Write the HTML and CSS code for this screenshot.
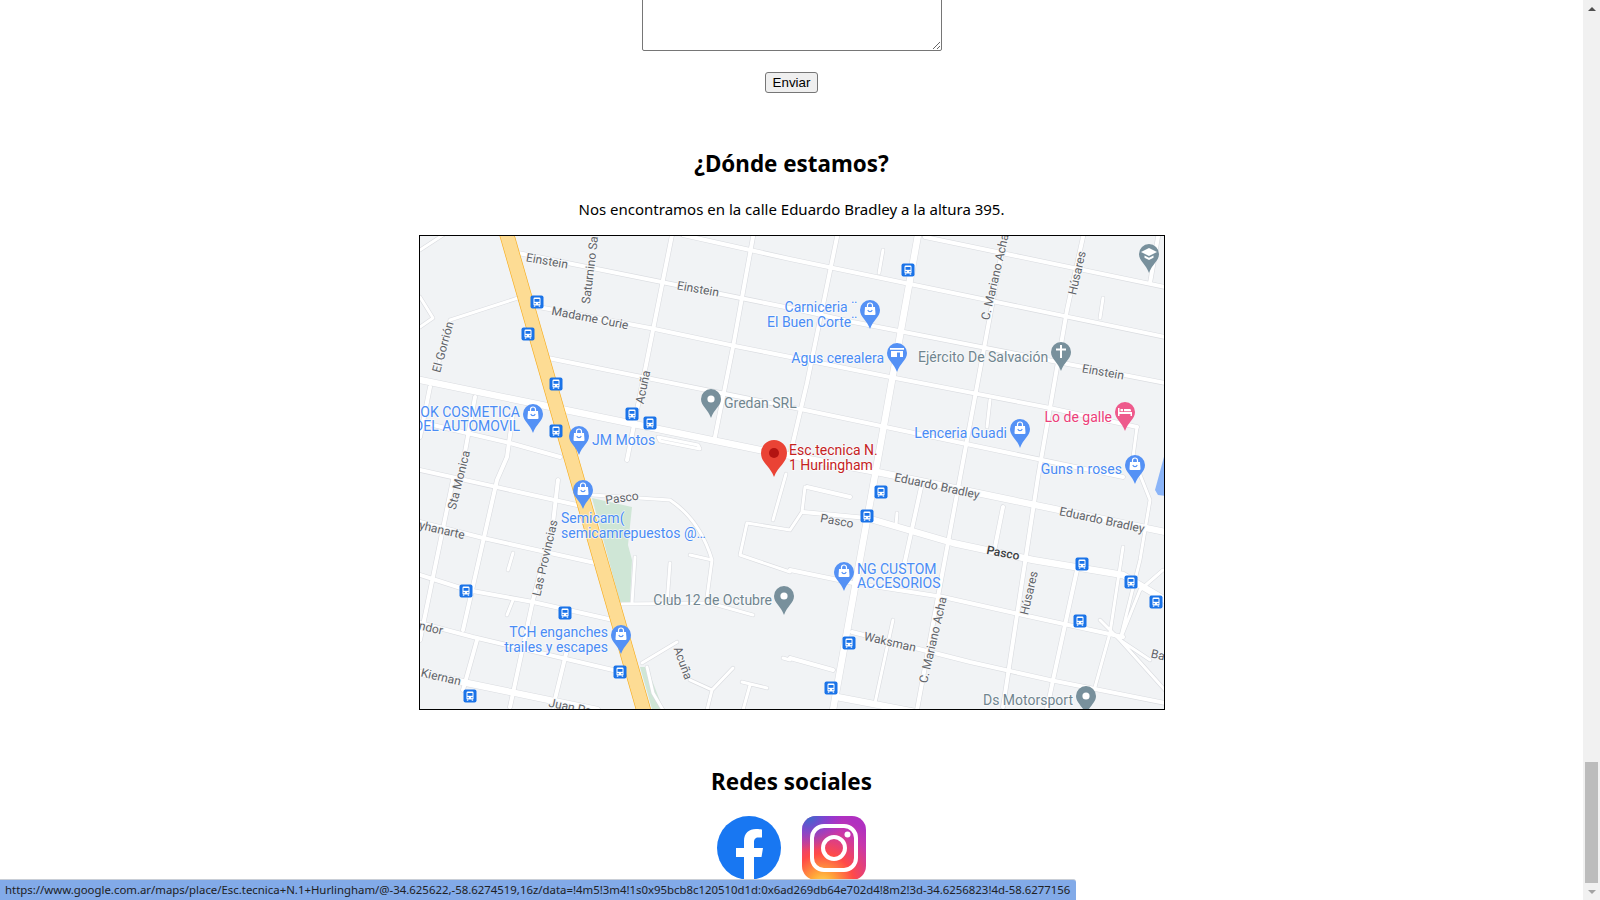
FILE: index.html
```html
<!DOCTYPE html>
<html lang="es">
<head>
    <meta charset="UTF-8">
    <meta name="viewport" content="width=device-width, initial-scale=1.0">
    <title>Contacto</title>
    <link rel="stylesheet" href="styles.css">
</head>
<body>
    <main class="page">
        <form class="contact-form">
            <textarea class="message"></textarea>
            <button type="button" class="send">Enviar</button>
        </form>

        <h2 class="where-title">¿Dónde estamos?</h2>
        <p class="where-text">Nos encontramos en la calle Eduardo Bradley a la altura 395.</p>

        <svg class="map" viewBox="420 236 744 473" role="img" aria-label="Mapa">
            <defs>
                <g id="thin">
                    <path d="M450 320L518 298M450 320L437 370M420 250L443 235M420 297L433 318L420 327"/>
                    <path d="M658 437L698 445L700 449L660 441Z"/>
                    <path d="M592 495L670 500Q700 520 712 560M690 555L712 560L707 597M635 557L632 603M670 563L667 603"/>
                    <path d="M622 604L710 603L753 615M642 663L677 642M647 667L653 693L663 710M690 680L712 690L733 668M712 690L707 710M742 682L767 688M750 685L743 710M783 658L790 660"/>
                    <path d="M790 530L747 523L740 555L790 572M790 530L802 512L805 487M786 474L773 520"/>
                    <path d="M883 250L879 273M1103 298L1100 318M990 400L987 427M897 513L896 525M513 553L508 570M513 600L507 615M893 620L875 703"/>
                    <path d="M1137 427L1133 457L1150 500L1140 560L1120 640M1123 547L1110 633L1095 687M1163 570L1140 590L1120 640L1165 690M1120 640L1100 620M1120 640L1150 660"/>
                </g>
                <g id="minor">
                    <path d="M683 235L790 259L905 283L1165 337M925 237L1165 287"/>
                    <path d="M518 253L790 308L853 322L1165 383"/>
                    <path d="M533 306L650 328L730 345L890 377L1050 408L1137 427"/>
                    <path d="M548 358L805 410L1123 477"/>
                    <path d="M420 422L467 433L510 443L560 457M420 470L577 505M420 522L483 538L595 563M420 575L467 590L533 602L613 620M420 623L473 637L613 670"/>
                    <path d="M790 570L853 583L943 597L1023 615L1123 637M852 632L970 662L1050 680L1165 703M790 658L833 670M803 512L867 518M807 487L850 497"/>
                    <path d="M672 235L653 330L627 460M753 237L733 347L715 437M837 237L807 383L790 455"/>
                    <path d="M1005 235L917 710M1083 237L1067 310L1038 477L1003 707M1158 237L1150 283"/>
                    <path d="M922 483L903 570M1003 507L995 547M1077 570L1053 680L1047 709"/>
                    <path d="M475 397L463 463M430 387L420 437M513 413L507 457L497 480L463 630M558 480L553 523L533 600L510 707M453 480L420 640M477 640L463 690M567 650L553 707"/>
                </g>
                <g id="wide">
                    <path d="M420 380L760 450L877 472L1165 532M867 518L953 543L1033 560L1123 575L1165 600M420 673L467 683L597 710M837 697L957 720"/>
                    <path d="M918 235L833 710"/>
                </g>
                <g id="bus">
                    <rect x="-6.500" y="-6.500" width="13" height="13" rx="2" fill="#1a73e8"/>
                    <rect x="-3.500" y="-4.500" width="7" height="8" rx="1.200" fill="#fff"/>
                    <rect x="-2.500" y="-3" width="5" height="2.800" fill="#1a73e8"/>
                    <rect x="-2.500" y="1" width="1.200" height="1.200" fill="#1a73e8"/>
                    <rect x="1.300" y="1" width="1.200" height="1.200" fill="#1a73e8"/>
                    <rect x="-3.200" y="3.500" width="1.500" height="1.200" fill="#fff"/>
                    <rect x="1.700" y="3.500" width="1.500" height="1.200" fill="#fff"/>
                </g>
                <path id="drop" d="M0-10A10 10 0 0 1 10 0C10 7 3 10 0 19C-3 10-10 7-10 0A10 10 0 0 1 0-10Z"/>
                <g id="pin-shop">
                    <use href="#drop"/>
                    <path d="M-5-3H5L5.500 4Q5.500 5 4.500 5H-4.500Q-5.500 5-5.500 4Z" fill="#fff"/>
                    <path d="M-2.500-3V-4.500A2.500 2.500 0 0 1 2.500-4.500V-3" fill="none" stroke="#fff" stroke-width="1.200"/>
                    <path d="M-2.200 0A2.300 2.300 0 0 0 2.200 0" fill="none" stroke="#5491f5" stroke-width="1.100"/>
                </g>
                <g id="pin-store">
                    <use href="#drop"/>
                    <path d="M-7-5H7V-3.200H-7ZM-6-2H6V4H3V-.5H0V4H-6Z" fill="#fff"/>
                </g>
                <g id="pin-dot">
                    <use href="#drop"/>
                    <circle r="3.600" fill="#fff"/>
                </g>
                <g id="pin-cross">
                    <use href="#drop"/>
                    <path d="M-1-7H1V-3.500H5V-1.500H1V6H-1V-1.500H-5V-3.500H-1Z" fill="#fff"/>
                </g>
                <g id="pin-school">
                    <use href="#drop"/>
                    <path d="M0-6L8-2L0 2L-8-2ZM-4.500 1.500L0 3.800L4.500 1.500V3.800L0 6L-4.500 3.800Z" fill="#fff"/>
                </g>
                <g id="pin-bed">
                    <use href="#drop"/>
                    <path d="M-7-4H-5.500V0H7V4H5.500V2H-5.500V4H-7ZM-4.500-3H-2V-.8H-4.500ZM-1-3H5Q6-3 6-1.500V-.8H-1Z" fill="#fff"/>
                </g>
            </defs>

            <rect x="420" y="236" width="744" height="473" fill="#f1f3f5"/>
            <path class="park" d="M592 498L632 507L628 545L632 560L630 602L620 602ZM640 667L647 667L663 709L652 709Z"/>
            <path class="water" d="M1165 453L1155 490L1158 495L1165 496Z"/>

            <use href="#thin" class="casing thin"/>
            <use href="#minor" class="casing minor"/>
            <use href="#wide" class="casing wide"/>
            <use href="#thin" class="fill thin"/>
            <use href="#minor" class="fill minor"/>
            <use href="#wide" class="fill wide"/>

            <path class="highway-edge" d="M505.500 230L645 715"/>
            <path class="highway" d="M505.500 230L645 715"/>

            <use href="#bus" x="537" y="302"/>
            <use href="#bus" x="528" y="334"/>
            <use href="#bus" x="556" y="384"/>
            <use href="#bus" x="632" y="414"/>
            <use href="#bus" x="650" y="423"/>
            <use href="#bus" x="556" y="431"/>
            <use href="#bus" x="908" y="270"/>
            <use href="#bus" x="466" y="591"/>
            <use href="#bus" x="565" y="613"/>
            <use href="#bus" x="620" y="672"/>
            <use href="#bus" x="470" y="696"/>
            <use href="#bus" x="881" y="492"/>
            <use href="#bus" x="867" y="516"/>
            <use href="#bus" x="1082" y="564"/>
            <use href="#bus" x="1131" y="582"/>
            <use href="#bus" x="1156" y="602"/>
            <use href="#bus" x="1080" y="621"/>
            <use href="#bus" x="849" y="643"/>
            <use href="#bus" x="831" y="688"/>

            <g class="street">
                <text x="547" y="261" transform="rotate(10 547 261)">Einstein</text>
                <text x="698" y="289" transform="rotate(10 698 289)">Einstein</text>
                <text x="1103" y="372" transform="rotate(10 1103 372)">Einstein</text>
                <text x="590" y="318" transform="rotate(11 590 318)">Madame Curie</text>
                <text x="590" y="270" transform="rotate(-83 590 270)">Saturnino Sa</text>
                <text x="443" y="347" transform="rotate(-75 443 347)">El Gorrión</text>
                <text x="643" y="387" transform="rotate(-78 643 387)">Acuña</text>
                <text x="995" y="277" transform="rotate(-77 995 277)">C. Mariano Acha</text>
                <text x="1077" y="273" transform="rotate(-77 1077 273)">Húsares</text>
                <text x="937" y="486" transform="rotate(12 937 486)">Eduardo Bradley</text>
                <text x="1102" y="520" transform="rotate(12 1102 520)">Eduardo Bradley</text>
                <text x="622" y="498" transform="rotate(-8 622 498)">Pasco</text>
                <text x="837" y="521" transform="rotate(10 837 521)">Pasco</text>
                <text x="1003" y="553" transform="rotate(11 1003 553)" class="street-main">Pasco</text>
                <text x="459" y="480" transform="rotate(-76 459 480)">Sta Monica</text>
                <text x="442" y="530" transform="rotate(13 442 530)">yhanarte</text>
                <text x="545" y="558" transform="rotate(-77 545 558)">Las Provincias</text>
                <text x="431" y="628" transform="rotate(13 431 628)">ndor</text>
                <text x="441" y="677" transform="rotate(13 441 677)">Kiernan</text>
                <text x="570" y="707" transform="rotate(12 570 707)">Juan Pa</text>
                <text x="683" y="663" transform="rotate(70 683 663)">Acuña</text>
                <text x="933" y="640" transform="rotate(-77 933 640)">C. Mariano Acha</text>
                <text x="1029" y="593" transform="rotate(-77 1029 593)">Húsares</text>
                <text x="890" y="642" transform="rotate(13 890 642)">Waksman</text>
                <text x="1158" y="655" transform="rotate(13 1158 655)">Ba</text>
            </g>

            <g class="label label-blue">
                <text x="520" y="412" class="end">OK COSMETICA</text>
                <text x="520" y="426" class="end">DEL AUTOMOVIL</text>
                <text x="592" y="440">JM Motos</text>
                <text x="857" y="307" class="end">Carniceria ¨</text>
                <text x="857" y="322" class="end">El Buen Corte¨</text>
                <text x="884" y="358" class="end">Agus cerealera</text>
                <text x="1007" y="433" class="end">Lenceria Guadi</text>
                <text x="1122" y="469" class="end">Guns n roses</text>
                <text x="561" y="518">Semicam(</text>
                <text x="561" y="533">semicamrepuestos @…</text>
                <text x="608" y="632" class="end">TCH enganches</text>
                <text x="608" y="647" class="end">trailes y escapes</text>
                <text x="857" y="569">NG CUSTOM</text>
                <text x="857" y="583">ACCESORIOS</text>
            </g>
            <g class="label label-grey">
                <text x="724" y="403">Gredan SRL</text>
                <text x="918" y="357">Ejército De Salvación</text>
                <text x="772" y="600" class="end">Club 12 de Octubre</text>
                <text x="1073" y="700" class="end">Ds Motorsport</text>
            </g>
            <g class="label label-pink">
                <text x="1112" y="417" class="end">Lo de galle</text>
            </g>
            <g class="label label-red">
                <text x="789" y="450">Esc.tecnica N.</text>
                <text x="789" y="465">1 Hurlingham</text>
            </g>

            <use href="#pin-shop" class="pin-blue" x="533" y="414"/>
            <use href="#pin-shop" class="pin-blue" x="579" y="436"/>
            <use href="#pin-shop" class="pin-blue" x="870" y="310"/>
            <use href="#pin-store" class="pin-blue" x="897" y="353"/>
            <use href="#pin-shop" class="pin-blue" x="1020" y="429"/>
            <use href="#pin-shop" class="pin-blue" x="1135" y="465"/>
            <use href="#pin-shop" class="pin-blue" x="583" y="490"/>
            <use href="#pin-shop" class="pin-blue" x="621" y="635"/>
            <use href="#pin-shop" class="pin-blue" x="844" y="572"/>
            <use href="#pin-bed" class="pin-pink" x="1125" y="412"/>
            <use href="#pin-cross" class="pin-grey" x="1061" y="352"/>
            <use href="#pin-school" class="pin-grey" x="1149" y="254"/>
            <use href="#pin-dot" class="pin-grey" x="711" y="399"/>
            <use href="#pin-dot" class="pin-grey" x="784" y="596"/>
            <use href="#pin-dot" class="pin-grey" x="1086" y="696"/>

            <path class="pin-red" d="M774 440A13 13 0 0 1 787 453C787 463 778 466 774 477C770 466 761 463 761 453A13 13 0 0 1 774 440Z"/>
            <circle class="pin-red-dot" cx="774" cy="453" r="5"/>
        </svg>

        <h2 class="social-title">Redes sociales</h2>
        <div class="social-links">
            <a href="#" class="social-link">
                <svg viewBox="0 0 64 64" class="social-icon">
                    <circle cx="32" cy="32" r="32" fill="#1877f2"/>
                    <path d="M27 64V41H19V32H27V25C27 17 32 13 39 13C42 13 45 13.500 45 13.500V21.500H41C38 21.500 37 24 37 26V32H46L44.500 41H37V64Z" fill="#fff"/>
                </svg>
            </a>
            <a href="#" class="social-link">
                <svg viewBox="0 0 64 64" class="social-icon">
                    <defs>
                        <radialGradient id="ig-warm" cx="0.32" cy="1.08" r="1.1">
                            <stop offset="0" stop-color="#ffdd55"/>
                            <stop offset="0.18" stop-color="#ffa63a"/>
                            <stop offset="0.45" stop-color="#ff4a48"/>
                            <stop offset="0.8" stop-color="#c837ab"/>
                            <stop offset="1" stop-color="#b030c0"/>
                        </radialGradient>
                        <radialGradient id="ig-cool" cx="0.1" cy="0" r="0.55">
                            <stop offset="0" stop-color="#3771c8"/>
                            <stop offset="1" stop-color="#6633ff" stop-opacity="0"/>
                        </radialGradient>
                    </defs>
                    <rect width="64" height="64" rx="14" fill="url(#ig-warm)"/>
                    <rect width="64" height="64" rx="14" fill="url(#ig-cool)"/>
                    <rect x="10" y="10" width="44" height="44" rx="12" fill="none" stroke="#fff" stroke-width="4"/>
                    <circle cx="32" cy="32" r="11" fill="none" stroke="#fff" stroke-width="4"/>
                    <circle cx="45.500" cy="18.500" r="3" fill="#fff"/>
                </svg>
            </a>
        </div>

        <div class="status-bubble">https://www.google.com.ar/maps/place/Esc.tecnica+N.1+Hurlingham/@-34.625622,-58.6274519,16z/data=!4m5!3m4!1s0x95bcb8c120510d1d:0x6ad269db64e702d4!8m2!3d-34.6256823!4d-58.6277156</div>
    </main>

    <div class="scrollbar">
        <div class="scroll-btn"><span class="arrow-up"></span></div>
        <div class="scroll-track"><div class="scroll-thumb"></div></div>
        <div class="scroll-btn"><span class="arrow-down"></span></div>
    </div>
</body>
</html>
```

FILE: styles.css
```css
html,
body {
    height: 100%;
}

body {
    display: flex;
    margin: 0;
    overflow: hidden;
    background: #fff;
    color: #000;
    font-family: "Noto Sans", "Open Sans", sans-serif;
}

.page {
    position: relative;
    flex: 1;
    display: flex;
    flex-direction: column;
    align-items: center;
    overflow: hidden;
    text-align: center;
}

.contact-form {
    display: flex;
    flex-direction: column;
    align-items: center;
}

.message {
    display: block;
    width: 300px;
    height: 85px;
    margin: -34px 0 0;
    padding: 2px;
    border: 1px solid #767676;
    border-radius: 2px;
    box-sizing: border-box;
}

.send {
    width: 53px;
    height: 21px;
    margin-top: 21px;
    padding: 0;
    background: #efefef;
    border: 1px solid #767676;
    border-radius: 3px;
    font-family: "Liberation Sans", Arial, sans-serif;
    font-size: 13.333px;
    color: #000;
}

.where-title {
    margin: 53px 0 0;
    font-size: 22.4px;
    line-height: 36px;
    font-weight: 700;
}

.where-text {
    margin: 16px 0 0;
    font-size: 15px;
    line-height: 22px;
}

.map {
    display: block;
    flex: none;
    width: 744px;
    height: 473px;
    margin-top: 15px;
    border: 1px solid #000;
}

.social-title {
    margin: 54px 0 0;
    font-size: 22.4px;
    line-height: 36px;
    font-weight: 700;
}

.social-links {
    display: flex;
    gap: 21px;
    margin-top: 16px;
}

.social-link {
    display: block;
}

.social-icon {
    display: block;
    width: 64px;
    height: 64px;
}

.status-bubble {
    position: absolute;
    left: 0;
    bottom: 0;
    height: 20px;
    padding: 0 6px 0 5px;
    background: #82aae8;
    border-top: 1px solid #c9ced6;
    border-top-right-radius: 3px;
    font-family: "Noto Sans", sans-serif;
    font-size: 11.4px;
    line-height: 20px;
    color: #202124;
    white-space: nowrap;
}

/* scrollbar, page is shown scrolled to near the end */
.scrollbar {
    flex: none;
    display: flex;
    flex-direction: column;
    width: 17px;
    background: #f1f1f1;
}

.scroll-btn {
    flex: none;
    display: flex;
    align-items: center;
    justify-content: center;
    height: 17px;
}

.scroll-track {
    flex: 1;
}

.scroll-thumb {
    height: 121px;
    margin: 745px 2px 0;
    background: #bcbcbc;
}

.arrow-up,
.arrow-down {
    width: 0;
    height: 0;
    border-left: 4px solid transparent;
    border-right: 4px solid transparent;
}

.arrow-up {
    border-bottom: 4px solid #505050;
}

.arrow-down {
    border-top: 4px solid #a3a3a3;
}

/* map */
.map text {
    font-family: Roboto, "Noto Sans", sans-serif;
    dominant-baseline: central;
}

.casing,
.fill {
    fill: none;
    stroke-linecap: round;
    stroke-linejoin: round;
}

.casing {
    stroke: #dadce0;
}

.fill {
    stroke: #fff;
}

.fill.thin { stroke-width: 3; }
.casing.thin { stroke-width: 4.2; }
.fill.minor { stroke-width: 4; }
.casing.minor { stroke-width: 5.2; }
.fill.wide { stroke-width: 6.5; }
.casing.wide { stroke-width: 7.5; }

.park {
    fill: #cfe6d6;
}

.water {
    fill: #8ab4f8;
}

.highway-edge {
    stroke: #f6ab1a;
    stroke-width: 14.8;
}

.highway {
    stroke: #fddc94;
    stroke-width: 13.6;
}

.street text {
    font-size: 12px;
    fill: #5f6368;
    text-anchor: middle;
    paint-order: stroke;
    stroke: #f6f7f8;
    stroke-width: 2px;
}

.street .street-main {
    font-weight: 500;
    fill: #3c4043;
}

.label text {
    font-size: 14px;
    paint-order: stroke;
    stroke: #fff;
    stroke-width: 1.5px;
    stroke-opacity: 0.7;
}

.label .end {
    text-anchor: end;
}

.label-blue text { fill: #4a8cf5; }
.label-grey text { fill: #70858f; }
.label-pink text { fill: #ec407a; }
.label-red text { fill: #c5221f; }

.pin-blue { fill: #5491f5; }
.pin-grey { fill: #78909c; }
.pin-pink { fill: #ee5a8c; }
.pin-red { fill: #ea4335; }
.pin-red-dot { fill: #b31412; }
```
